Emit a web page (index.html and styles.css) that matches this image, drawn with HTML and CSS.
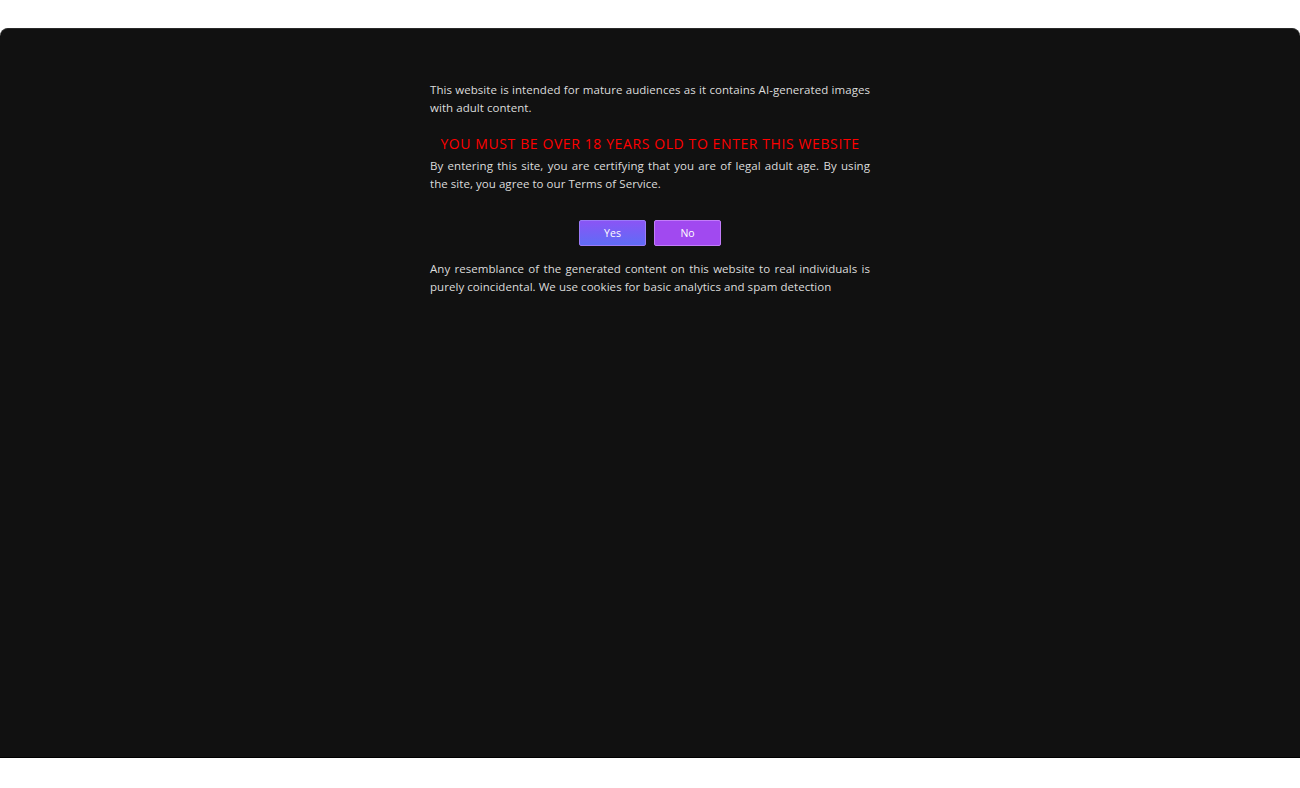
FILE: index.html
```html
<!DOCTYPE html>
<html>
<head>
<meta charset="utf-8">
<link rel="stylesheet" href="styles.css">
</head>
<body>
<div class="top-strip"></div>
<main class="panel">
  <section class="gate">
    <p class="text">This website is intended for mature audiences as it contains AI-generated images with adult content.</p>
    <h1 class="warning">YOU MUST BE OVER 18 YEARS OLD TO ENTER THIS WEBSITE</h1>
    <p class="text">By entering this site, you are certifying that you are of legal adult age. By using the site, you agree to our Terms of Service.</p>
    <div class="actions">
      <button class="btn btn-yes">Yes</button>
      <button class="btn btn-no">No</button>
    </div>
    <p class="text">Any resemblance of the generated content on this website to real individuals is purely coincidental. We use cookies for basic analytics and spam detection</p>
  </section>
</main>
</body>
</html>
```
FILE: styles.css
```css
html, body {
  margin: 0;
  padding: 0;
  background: #ffffff;
}
body {
  font-family: "Open Sans", "Noto Sans", sans-serif;
}
.top-strip {
  height: 28px;
}
.panel {
  height: 730px;
  background: #111111;
  border-radius: 8px 8px 0 0;
  border-top: 1px solid #2a2a2a;
  border-bottom: 1px solid #000;
  box-sizing: border-box;
  display: flex;
  justify-content: center;
  padding-top: 52px;
}
.gate {
  width: 440px;
}
.text {
  margin: 0;
  color: #dcdcdc;
  font-size: 11.5px;
  line-height: 17.5px;
  text-align: justify;
  letter-spacing: 0.05px;
}
.warning {
  margin: 18px 0 3px;
  color: #ff0000;
  font-size: 14px;
  line-height: 20px;
  font-weight: 500;
  text-align: center;
  letter-spacing: 0.6px;
  white-space: nowrap;
}
.actions {
  display: flex;
  justify-content: center;
  gap: 8px;
  margin: 28px 0 14px;
}
.btn {
  width: 67px;
  height: 26px;
  border-radius: 2px;
  border: 1px solid #a98cff;
  color: #ffffff;
  font-family: "Open Sans", sans-serif;
  font-size: 10.5px;
  font-weight: 500;
  padding: 0;
  cursor: pointer;
}
.btn-yes {
  background: linear-gradient(#8a55f5, #5f6cf6);
  border-color: #9a7af8;
}
.btn-no {
  background: #a149f0;
  border-color: #c27cf9;
}
```
